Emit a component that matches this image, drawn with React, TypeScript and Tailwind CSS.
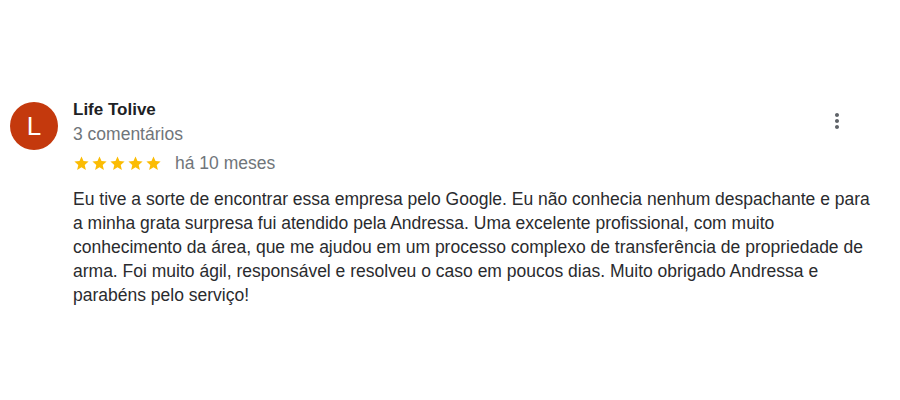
import React from 'react'

function Star() {
  return (
    <svg width="17" height="17" viewBox="0 0 24 24" className="shrink-0">
      <path fill="#fbbc04" d="M12 17.27L18.18 21l-1.64-7.03L22 9.24l-7.19-.61L12 2 9.19 8.63 2 9.24l5.46 4.73L5.82 21z" />
    </svg>
  )
}

export default function App() {
  return (
    <div className="w-[900px] h-[400px] bg-white font-['Liberation_Sans']">
      <div className="flex pt-[102px] pl-[10px] pr-[30px] gap-[15px]">
        <div className="w-12 h-12 rounded-full bg-[#c4390d] flex items-center justify-center shrink-0 text-white text-[26px]">
          L
        </div>
        <div className="flex-1 min-w-0">
          <div className="flex">
            <div className="flex-1">
              <div className="text-[17px] leading-[15px] font-bold text-[#202124]">Life Tolive</div>
              <div className="text-[17.5px] leading-[24px] text-[#70757a] mt-[5px]">3 comentários</div>
              <div className="flex items-center mt-[5px]">
                <div className="flex gap-[1px]">
                  <Star />
                  <Star />
                  <Star />
                  <Star />
                  <Star />
                </div>
                <span className="ml-[13px] text-[17.5px] leading-[24px] text-[#70757a]">há 10 meses</span>
              </div>
            </div>
            <div className="mt-[7px] mr-[21px]">
              <svg width="24" height="24" viewBox="0 0 24 24">
                <path fill="#5f6368" d="M12 8c1.1 0 2-.9 2-2s-.9-2-2-2-2 .9-2 2 .9 2 2 2zm0 2c-1.1 0-2 .9-2 2s.9 2 2 2 2-.9 2-2-.9-2-2-2zm0 6c-1.1 0-2 .9-2 2s.9 2 2 2 2-.9 2-2-.9-2-2-2z" />
              </svg>
            </div>
          </div>
          <p className="mt-[12px] text-[17.5px] leading-[24px] text-[#2a2b2e] w-[800px]">
            Eu tive a sorte de encontrar essa empresa pelo Google. Eu não conhecia nenhum despachante e para a minha grata surpresa fui atendido pela Andressa. Uma excelente profissional, com muito conhecimento da área, que me ajudou em um processo complexo de transferência de propriedade de arma. Foi muito ágil, responsável e resolveu o caso em poucos dias. Muito obrigado Andressa e parabéns pelo serviço!
          </p>
        </div>
      </div>
    </div>
  )
}
